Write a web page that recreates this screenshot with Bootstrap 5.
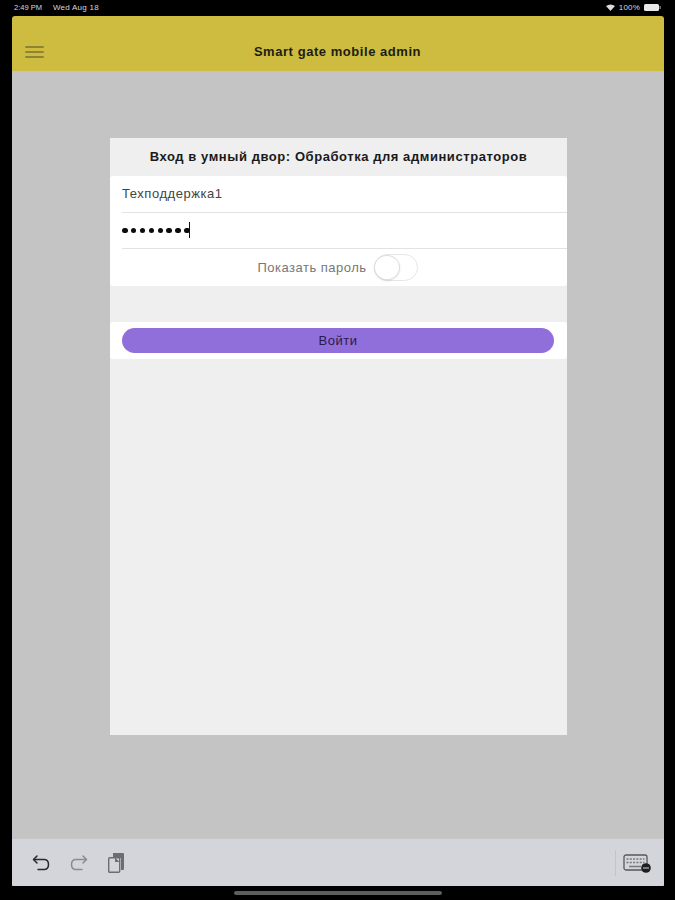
<!DOCTYPE html>
<html lang="ru">
<head>
<meta charset="utf-8">
<title>Smart gate mobile admin</title>
<link rel="stylesheet" href="https://cdn.jsdelivr.net/npm/bootstrap@5.3.0/dist/css/bootstrap.min.css">
<style>
html,body{height:900px;overflow:hidden}
body{background:#000;font-family:"Liberation Sans",Arial,sans-serif;width:675px}
.statusline{height:16px;padding:0 14px 2px 14px;color:#d8d8d8;font-size:7.5px;line-height:13px}
.status-date{margin-left:11px;font-size:8px;letter-spacing:.25px}
.status-batt{font-size:8px;letter-spacing:.2px}
.screen-wrap{height:871px;margin:0 11px 0 12px;border-radius:3px 3px 2px 2px;overflow:hidden}
.topbar{height:55px;background:#cdbc3f;padding:17px 20px 0 19px;position:relative}
.topbar-title{font-size:13px;font-weight:700;color:#1c1c14;letter-spacing:.55px;width:100%}
.burger{position:absolute;left:13px;top:30px;width:19px}
.burger-line{height:2px;background:#8f8433;margin-bottom:3px;border-radius:1px}
.stage{height:768px;background:#c4c4c4;padding:67px 97px 104px 98px}
.panel{height:597px;background:#efefef}
.panel-head{height:38px;font-size:13px;font-weight:700;color:#1a1a1a;letter-spacing:.56px}
.fields{background:#fff;height:110px;padding-left:12px;border-radius:3px}
.field-row{height:36.5px;border-bottom:1.5px solid #e2e2e2;font-size:13px;color:#444;letter-spacing:.55px}
.field-row:last-child{border-bottom:0}
.show-row{padding-right:14px}
.dot-row{gap:3.4px}
.dot{width:5.5px;height:5.5px;border-radius:50%;background:#0c0c0c}
.caret-bar{width:1.5px;height:16px;background:#111;margin-left:-1px}
.show-label{font-size:13px;color:#777;letter-spacing:.5px}
.toggle-track{width:44px;height:27px;border:1px solid #e6e6e6;border-radius:14px;position:relative;background:#fff;margin-left:-1px}
.toggle-knob{position:absolute;left:-1px;top:0;width:26px;height:25px;border-radius:50%;background:#fff;border:1px solid #dcdcdc;box-shadow:0 1px 2px rgba(0,0,0,.1)}
.btn-wrap{margin-top:36px;background:#fff;height:37px;padding:6px 13px 0 12px;border-radius:3px}
.btn.login-btn{width:100%;height:25px;padding:0;border:0;border-radius:13px;background:#906fdb;color:#2a1a4e;font-size:13px;line-height:25px;letter-spacing:.5px}
.kb-bar{height:47px;background:#d3d5da;padding:0 13px 0 19px}
.tool-group{gap:18px}
.kb-group{gap:7px}
.tool-sep{width:1px;height:26px;background:#c2c4c8}
.home-strip{height:13px}
.home-pill{width:208px;height:4px;border-radius:2px;background:#5e5e5e;margin-top:4px}
</style>
</head>
<body>
<div class="statusline d-flex justify-content-between align-items-center">
  <span class="d-flex"><span>2:49 PM</span><span class="status-date">Wed Aug 18</span></span>
  <span class="d-flex align-items-center gap-1">
    <svg width="9" height="7" viewBox="0 0 9 7"><path d="M0 2 Q4.500 -1 9 2 L4.500 7 Z" fill="#dcdcdc"/></svg>
    <span class="status-batt">100%</span>
    <svg width="17" height="7" viewBox="0 0 17 7"><rect x="0" y="0" width="15" height="7" rx="1.500" fill="#e8e8e8"/><rect x="15.500" y="2" width="1.200" height="3" fill="#999"/></svg>
  </span>
</div>
<div class="screen-wrap">
  <div class="topbar d-flex align-items-center">
    <div class="burger"><div class="burger-line"></div><div class="burger-line"></div><div class="burger-line"></div></div>
    <div class="topbar-title text-center">Smart gate mobile admin</div>
  </div>
  <div class="stage">
    <div class="panel">
      <div class="panel-head d-flex align-items-center justify-content-center">Вход в умный двор: Обработка для администраторов</div>
      <div class="fields">
        <div class="field-row d-flex align-items-center">Техподдержка1</div>
        <div class="field-row d-flex align-items-center">
          <span class="d-flex dot-row"><i class="dot"></i><i class="dot"></i><i class="dot"></i><i class="dot"></i><i class="dot"></i><i class="dot"></i><i class="dot"></i><i class="dot"></i></span><span class="caret-bar"></span>
        </div>
        <div class="field-row show-row d-flex align-items-center justify-content-center gap-2">
          <span class="show-label">Показать пароль</span>
          <span class="toggle-track"><span class="toggle-knob"></span></span>
        </div>
      </div>
      <div class="btn-wrap"><button type="button" class="btn login-btn">Войти</button></div>
    </div>
  </div>
  <div class="kb-bar d-flex align-items-center justify-content-between">
    <div class="d-flex align-items-center tool-group">
      <svg width="20" height="20" viewBox="0 0 20 20" fill="none" stroke="#2a2a2e" stroke-width="1.500" stroke-linecap="round" stroke-linejoin="round"><path d="M6 3 L2.500 6.500 L6 10"/><path d="M3 6.500 H13 Q17.500 6.500 17.500 11.500 Q17.500 16.500 13 16.500 H7"/></svg>
      <svg width="20" height="20" viewBox="0 0 20 20" fill="none" stroke="#8a8c92" stroke-width="1.500" stroke-linecap="round" stroke-linejoin="round"><path d="M14 3 L17.500 6.500 L14 10"/><path d="M17 6.500 H7 Q2.500 6.500 2.500 11.500 Q2.500 16.500 7 16.500 H13"/></svg>
      <svg width="18" height="22" viewBox="0 0 18 22"><path d="M6 1 H16 A1 1 0 0 1 17 2 V17 A1 1 0 0 1 16 18 H14 V6 H6 Z" fill="#6b6d72"/><rect x="1.700" y="5.700" width="11" height="14.600" rx="1" fill="#d3d5da" stroke="#6b6d72" stroke-width="1.400"/><path d="M8 5.500 L12.500 10 H8 Z" fill="#6b6d72"/></svg>
    </div>
    <div class="d-flex align-items-center kb-group">
      <span class="tool-sep"></span>
      <svg width="28" height="20" viewBox="0 0 28 20"><rect x="1" y="2" width="23" height="15" rx="2" fill="#d3d5da" stroke="#55575c" stroke-width="1.300"/><g stroke="#77797e" stroke-width="1.300" stroke-dasharray="2 1.300"><path d="M3.500 6 H21.500"/><path d="M3.500 9.500 H21.500"/></g><path d="M6 13.500 H18" stroke="#77797e" stroke-width="1.500"/><circle cx="23" cy="15" r="4.800" fill="#1e1e20"/><path d="M20 15 H26" stroke="#d3d5da" stroke-width="1.100"/></svg>
    </div>
  </div>
</div>
<div class="home-strip d-flex justify-content-center"><div class="home-pill"></div></div>
</body>
</html>
